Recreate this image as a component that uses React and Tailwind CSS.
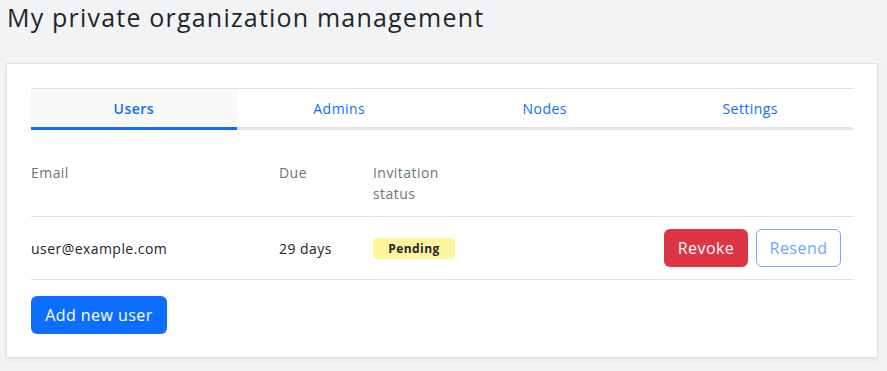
export default function App() {
  const font = { fontFamily: '"Open Sans", "Liberation Sans", sans-serif' };
  return (
    <div className="min-h-[371px] bg-[#f2f3f5] pt-[2px] tracking-[0.45px]" style={font}>
      <h1 className="pl-[7px] text-[25px] leading-[30px] font-normal tracking-[1.2px] text-[#212529]">
        My private organization management
      </h1>
      <div className="ml-[6px] mt-[31px] w-[872px] border border-[#dee2e6] bg-white px-[24px] pt-[24px] pb-[23px] shadow-[0_2px_4px_rgba(0,0,0,0.06)]">
        <div className="grid grid-cols-4 border-t border-[#dee2e6] text-[14px]">
          <div className="flex h-[41px] items-center justify-center border-b-[3px] border-[#0d6efd] bg-[#f9f9f9] font-semibold text-[#0d6efd]">
            Users
          </div>
          <div className="flex h-[41px] items-center justify-center border-b-[3px] border-[#e5e5e5] text-[#0d6efd]">
            Admins
          </div>
          <div className="flex h-[41px] items-center justify-center border-b-[3px] border-[#e5e5e5] text-[#0d6efd]">
            Nodes
          </div>
          <div className="flex h-[41px] items-center justify-center border-b-[3px] border-[#e5e5e5] text-[#0d6efd]">
            Settings
          </div>
        </div>
        <div className="mt-[32px] grid grid-cols-[248px_94px_1fr_auto] border-b border-[#dee2e6] pb-[12px] text-[14px] leading-[21px] text-[#6c757d]">
          <div>Email</div>
          <div>Due</div>
          <div>
            Invitation
            <br />
            status
          </div>
          <div></div>
        </div>
        <div className="grid grid-cols-[248px_94px_1fr_auto] items-center border-b border-[#dee2e6] py-[12px] pr-[12px] text-[14px] text-[#212529]">
          <div>user@example.com</div>
          <div>29 days</div>
          <div>
            <span className="inline-flex h-[21px] w-[82px] items-center justify-center rounded-[4px] bg-[#fff59d] text-[12px] font-bold text-[#212529]">
              Pending
            </span>
          </div>
          <div className="flex gap-[8px]">
            <button className="h-[38px] w-[84px] rounded-[6px] bg-[#dc3545] text-[16px] text-white">
              Revoke
            </button>
            <button className="h-[38px] w-[85px] rounded-[6px] border border-[#6ea8fe] bg-white text-[16px] text-[#6ea8fe]">
              Resend
            </button>
          </div>
        </div>
        <button className="mt-[16px] h-[38px] w-[136px] rounded-[6px] bg-[#0d6efd] text-[16px] text-white">
          Add new user
        </button>
      </div>
    </div>
  );
}
